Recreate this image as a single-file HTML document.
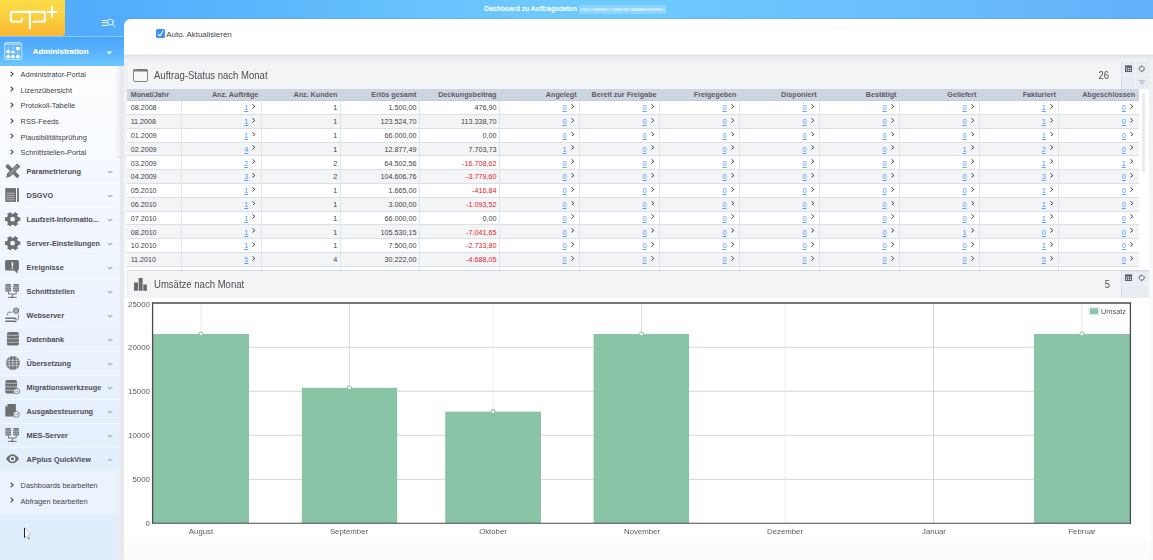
<!DOCTYPE html>
<html lang="de">
<head>
<meta charset="utf-8">
<title>Dashboard zu Auftragsdaten</title>
<style>
*{box-sizing:border-box;margin:0;padding:0}
html,body{width:1153px;height:560px;overflow:hidden}
body{font-family:"Liberation Sans",sans-serif;font-size:7.2px;color:#433c49;background:linear-gradient(180deg,#eff0f3 0,#f0f1f4 90px,#f8f9fa 290px,#f9fbfb 560px);position:relative}
.abs{position:absolute}
#hdr{left:0;top:0;width:1153px;height:36px;background:linear-gradient(90deg,#50a9fb 0%,#55aefc 12%,#6ecafd 47%,#6ecafd 55%,#67b9fc 88%,#62b1fb 100%)}
#hdrtitle{left:484.3px;top:3.8px;font-size:6.8px;font-weight:bold;color:#fff;white-space:nowrap;line-height:9px}
#blur{left:579px;top:5px;width:87px;height:8.8px;background:rgba(255,255,255,.2);filter:blur(.5px)}
#logo{left:0;top:0;width:65.2px;height:36.4px;background:linear-gradient(180deg,#fcdc48 0%,#fbd03f 45%,#fbb733 100%);border-bottom-right-radius:3.5px}
#side{left:0;top:66px;width:120px;height:494px;background:linear-gradient(180deg,#fdfeff 0,#f7fafe 93px,#ebf3fd 405px,#ebf3fd 448px,#e0edfc 449px,#e0edfc 100%)}
#sideedge{left:114px;top:66px;width:6px;height:494px;background:linear-gradient(90deg,rgba(236,239,244,0),rgba(234,237,242,.9))}
#strip{left:120px;top:36px;width:4px;height:524px;background:#e7e9ed}
#admin{left:0;top:36px;width:124px;height:30.3px;background:linear-gradient(180deg,#4ba5fb 0%,#58b1fc 45%,#6cc6fc 100%);border-top:.8px solid #83cbfd}
#admintx{left:32.8px;top:46.9px;font-size:7.9px;font-weight:bold;color:#fff;line-height:10px;white-space:nowrap;text-shadow:0 0 .6px rgba(255,255,255,.5)}
.sub{position:absolute;left:20.6px;font-size:7.4px;color:#473f4e;line-height:10px;white-space:nowrap}
.chev{position:absolute;left:9.6px;width:4px;height:6px}
.mi{position:absolute;left:0;width:120px;height:24px;border-top:.8px solid rgba(255,255,255,.45)}
.mi .t{position:absolute;left:26.6px;top:7px;font-size:7.35px;font-weight:bold;color:#4f4a57;line-height:10px;white-space:nowrap}
.mi .ar{position:absolute;left:107.4px;top:10.6px;width:6px;height:3px}
.mi svg{position:absolute;left:0;top:-.8px}
#panel{left:124px;top:18.8px;width:1029px;height:35.7px;background:#fff;border-top-left-radius:6.5px}
#panelsh{left:124px;top:54.5px;width:1029px;height:5px;background:linear-gradient(180deg,#e2e4e7,#eef0f3)}
#cb{left:155.6px;top:29.2px;width:9px;height:9.2px;background:#3d8ffc;border-radius:1.6px}
#cbtx{left:166.3px;top:30.1px;font-size:7.9px;line-height:10px;color:#473d49;white-space:nowrap}
.ph{position:absolute;left:127px;width:1021.8px;background:#f3f4f6;border-left:.8px solid #eceef1}
.ptitle{position:absolute;left:154px;font-size:10.7px;line-height:12px;color:#4f4c55;white-space:nowrap;transform:scaleX(.893);transform-origin:0 50%}
.pcount{position:absolute;font-size:10.8px;line-height:12px;color:#4f4c55;text-align:right;width:30px;transform:scaleX(.87);transform-origin:100% 50%}
.tools{position:absolute;left:1121px;width:27.8px;background:#e9ecf2;border-left:1.2px solid #d7dde8;border-top:.8px solid #e1e5ec}
.tb{position:absolute;background:#e9ecf1}
#tbl{left:127.25px;top:89.4px;width:1011.5px;height:180.8px;overflow:hidden;background:#fff}
.hr{position:absolute;left:0;top:0;width:1011.5px;height:11.3px;background:#cdd5e0;border-bottom:.8px solid #c3ccd9}
.hc{position:absolute;top:.9px;font-size:7.2px;font-weight:bold;color:#605c67;line-height:9px;white-space:nowrap}
.r{position:absolute;left:0;width:1011.5px;height:13.8px;border-bottom:.9px solid #dce1e9}
.r.e{background:#f3f4f6}
.c{position:absolute;top:2.1px;font-size:7.2px;line-height:9px;color:#433c49;white-space:nowrap}
.c.neg{color:#e8202a}
.lk{position:absolute;top:2.1px;font-size:7.2px;line-height:9px;color:#4a95fb;text-decoration:underline;text-decoration-thickness:.75px;text-underline-offset:.9px;text-decoration-color:rgba(61,143,252,.85);white-space:nowrap}
.gt{position:absolute;top:2.7px;width:3.6px;height:4.8px}
.vl{position:absolute;top:11.8px;width:.9px;height:170px;background:#e0e4eb}
#sb{left:1138.75px;top:89.4px;width:10px;height:180.8px;background:#fff}
#sbth{left:1142px;top:93px;width:2.8px;height:79px;background:#e9ebef;border-radius:1.4px}
#chartbg{left:124px;top:297.8px;width:1025.5px;height:239.5px;background:#fff}
#below{left:124px;top:535.5px;width:1025.5px;height:25px;background:linear-gradient(180deg,#fff 0,#fafdfc 5px,#f9fcfb 100%)}
.yl{will-change:transform;position:absolute;font-size:7.9px;line-height:9px;color:#5c5c5c;text-align:right;width:30px;left:119.6px}
.xl{will-change:transform;position:absolute;font-size:7.8px;line-height:9px;color:#5c5c5c;text-align:center;width:60px;top:527.4px}
</style>
</head>
<body>

<div id="hdr" class="abs"></div>
<div id="hdrtitle" class="abs">Dashboard zu Auftragsdaten</div>
<div id="blur" class="abs"></div><div class="abs" style="left:580px;top:7.8px;width:85px;height:3.4px;filter:blur(.7px);background:linear-gradient(90deg,rgba(255,255,255,.25) 0,rgba(255,255,255,.4) 6%,rgba(255,255,255,.2) 14%,rgba(255,255,255,.45) 18%,rgba(255,255,255,.45) 30%,rgba(255,255,255,.15) 36%,rgba(255,255,255,.35) 40%,rgba(255,255,255,.5) 47%,rgba(255,255,255,.25) 51%,rgba(255,255,255,.55) 54%,rgba(255,255,255,.25) 58%,rgba(255,255,255,.5) 62%,rgba(255,255,255,.55) 72%,rgba(255,255,255,.4) 78%,rgba(255,255,255,.5) 92%,rgba(255,255,255,.25) 100%)"></div>
<div id="logo" class="abs"><svg width="66" height="37" viewBox="0 0 66 37" fill="none" stroke="#fff" stroke-width="2.1" stroke-linecap="round" stroke-linejoin="round"><path d="M21.9 18.6V19.6Q21.9 21.8 19.7 21.8H13.1Q10.9 21.8 10.9 19.6V14.1Q10.9 11.9 13.1 11.9H42.7Q44.9 11.9 44.9 14.1V19.6Q44.9 21.8 42.7 21.8H33.6"/><path d="M29.9 12V28.2"/><path d="M47.6 12H56.6M52 7V16.8"/></svg></div>
<svg class="abs" style="left:100px;top:17px" width="18" height="12" viewBox="100 17 18 12" fill="none" stroke="rgba(255,255,255,.95)" stroke-width=".95" stroke-linecap="round"><path d="M102.2 20.5H106.7M102.2 22.6H106.5M102.2 25.4H107.8"/><circle cx="110.4" cy="22.1" r="2.9"/><path d="M112.5 24.3L114.8 26.6"/></svg>
<div id="side" class="abs"></div>
<div id="sideedge" class="abs"></div>
<div id="strip" class="abs"></div>
<div id="admin" class="abs"></div>
<svg class="abs" style="left:3px;top:40px" width="21" height="22" viewBox="3 40 21 22">
<rect x="4.6" y="42.5" width="17.2" height="17.1" rx="1.6" fill="rgba(255,255,255,.08)" stroke="rgba(255,255,255,.75)" stroke-width=".8"/>
<path d="M5 42.9H21.4V44.6H5Z" fill="rgba(255,255,255,.3)"/><path d="M4.8 44.7H21.6" stroke="rgba(255,255,255,.55)" stroke-width=".6"/>
<path d="M8.3 46.3V58.4M12.9 46.3V58.4M17.8 46.3V58.4" stroke="rgba(255,255,255,.65)" stroke-width=".7"/>
<rect x="6.2" y="50.2" width="3.8" height="2.5" rx=".5" fill="#fff"/>
<rect x="11.1" y="51.3" width="3.8" height="1.7" rx=".4" fill="#fff"/>
<rect x="15.9" y="46.9" width="4.1" height="2.9" rx=".6" fill="#fff"/>
<ellipse cx="8.1" cy="56.6" rx="2" ry="1.7" fill="#fff"/><ellipse cx="12.9" cy="56.6" rx="2" ry="1.7" fill="#fff"/><ellipse cx="17.9" cy="56.6" rx="2" ry="1.7" fill="#fff"/>
</svg>
<div id="admintx" class="abs">Administration</div>
<svg class="abs" style="left:106px;top:50.6px" width="7" height="4" viewBox="0 0 7 4"><path d="M.3 .3H6.5L3.4 3.7Z" fill="rgba(255,255,255,.72)"/></svg>
<svg class="chev" style="top:70.7px" viewBox="0 0 4 6" fill="none" stroke="#524e58" stroke-width="1.05" stroke-linecap="round" stroke-linejoin="round"><path d="M.9 1L3.1 3L.9 5"/></svg>
<div class="sub" style="top:70px">Administrator-Portal</div>
<svg class="chev" style="top:86.3px" viewBox="0 0 4 6" fill="none" stroke="#524e58" stroke-width="1.05" stroke-linecap="round" stroke-linejoin="round"><path d="M.9 1L3.1 3L.9 5"/></svg>
<div class="sub" style="top:85.6px">Lizenzübersicht</div>
<svg class="chev" style="top:101.9px" viewBox="0 0 4 6" fill="none" stroke="#524e58" stroke-width="1.05" stroke-linecap="round" stroke-linejoin="round"><path d="M.9 1L3.1 3L.9 5"/></svg>
<div class="sub" style="top:101.2px">Protokoll-Tabelle</div>
<svg class="chev" style="top:117.5px" viewBox="0 0 4 6" fill="none" stroke="#524e58" stroke-width="1.05" stroke-linecap="round" stroke-linejoin="round"><path d="M.9 1L3.1 3L.9 5"/></svg>
<div class="sub" style="top:116.8px">RSS-Feeds</div>
<svg class="chev" style="top:133.2px" viewBox="0 0 4 6" fill="none" stroke="#524e58" stroke-width="1.05" stroke-linecap="round" stroke-linejoin="round"><path d="M.9 1L3.1 3L.9 5"/></svg>
<div class="sub" style="top:132.5px">Plausibilitätsprüfung</div>
<svg class="chev" style="top:148.7px" viewBox="0 0 4 6" fill="none" stroke="#524e58" stroke-width="1.05" stroke-linecap="round" stroke-linejoin="round"><path d="M.9 1L3.1 3L.9 5"/></svg>
<div class="sub" style="top:148px">Schnittstellen-Portal</div>
<svg class="chev" style="top:481.7px" viewBox="0 0 4 6" fill="none" stroke="#524e58" stroke-width="1.05" stroke-linecap="round" stroke-linejoin="round"><path d="M.9 1L3.1 3L.9 5"/></svg>
<div class="sub" style="top:481px">Dashboards bearbeiten</div>
<svg class="chev" style="top:497.3px" viewBox="0 0 4 6" fill="none" stroke="#524e58" stroke-width="1.05" stroke-linecap="round" stroke-linejoin="round"><path d="M.9 1L3.1 3L.9 5"/></svg>
<div class="sub" style="top:496.6px">Abfragen bearbeiten</div>
<div class="mi" style="top:159px;background:#f4f8fe"><svg width="24" height="24" viewBox="0 0 24 24"><g transform="rotate(-45 12.6 12.2)"><rect x="10.8" y="3.6" width="3.6" height="16.8" fill="#6d6e71"/></g><g transform="rotate(45 12.6 12.2)"><path d="M10.4 3.4H14.8V17.4L12.6 21.4L10.4 17.4Z" fill="#6d6e71"/><path d="M11.9 4.4V17M13.3 4.4V17" stroke="#dfe6f0" stroke-width=".45"/></g></svg><div class="t">Parametrierung</div><svg class="ar" style="left:107.4px;top:10.6px" viewBox="0 0 6 3"><path d="M.2 .1H5.8L3 2.9Z" fill="#b6bfcc"/></svg></div>
<div class="mi" style="top:183px;background:#f3f7fe"><svg width="24" height="24" viewBox="0 0 24 24"><rect x="5.3" y="5.1" width="10.7" height="13.8" fill="#6d6e71"/><path d="M6.6 10.2H14.8M6.6 12.4H14.8M6.6 14.6H14.8M6.6 16.8H14.8" stroke="#c9ccd2" stroke-width=".8"/><rect x="17.1" y="5.1" width="1.8" height="13.8" fill="#6d6e71"/></svg><div class="t">DSGVO</div><svg class="ar" style="left:107.4px;top:10.6px" viewBox="0 0 6 3"><path d="M.2 .1H5.8L3 2.9Z" fill="#b6bfcc"/></svg></div>
<div class="mi" style="top:207px;background:#f1f6fe"><svg width="24" height="24" viewBox="0 0 24 24"><path d="M17.85 10.7 L19.75 10.87 L19.75 13.53 L17.85 13.7 L16.63 15.64 L17.43 17.23 L14.92 18.57 L13.82 17.13 L11.38 17.13 L10.28 18.57 L7.77 17.23 L8.57 15.64 L7.35 13.7 L5.45 13.53 L5.45 10.87 L7.35 10.7 L8.57 8.76 L7.77 7.17 L10.28 5.83 L11.38 7.27 L13.82 7.27 L14.92 5.83 L17.43 7.17 L16.63 8.76Z" fill="#6d6e71" stroke="#6d6e71" stroke-width="1.1" stroke-linejoin="round"/><circle cx="12.6" cy="12.2" r="2.35" fill="#f2f6fc"/></svg><div class="t">Laufzeit-Informatio...</div><svg class="ar" style="left:107.4px;top:10.6px" viewBox="0 0 6 3"><path d="M.2 .1H5.8L3 2.9Z" fill="#b6bfcc"/></svg></div>
<div class="mi" style="top:231px;background:#f0f6fe"><svg width="24" height="24" viewBox="0 0 24 24"><path d="M17.85 10.7 L19.75 10.87 L19.75 13.53 L17.85 13.7 L16.63 15.64 L17.43 17.23 L14.92 18.57 L13.82 17.13 L11.38 17.13 L10.28 18.57 L7.77 17.23 L8.57 15.64 L7.35 13.7 L5.45 13.53 L5.45 10.87 L7.35 10.7 L8.57 8.76 L7.77 7.17 L10.28 5.83 L11.38 7.27 L13.82 7.27 L14.92 5.83 L17.43 7.17 L16.63 8.76Z" fill="#6d6e71" stroke="#6d6e71" stroke-width="1.1" stroke-linejoin="round"/><circle cx="12.6" cy="12.2" r="2.35" fill="#f2f6fc"/></svg><div class="t">Server-Einstellungen</div><svg class="ar" style="left:107.4px;top:10.6px" viewBox="0 0 6 3"><path d="M.2 .1H5.8L3 2.9Z" fill="#b6bfcc"/></svg></div>
<div class="mi" style="top:255px;background:#eef5fd"><svg width="24" height="24" viewBox="0 0 24 24"><path d="M6.6 5.1H17.4Q18.9 5.1 18.9 6.6V14Q18.9 15.4 17.6 15.4L17.7 18.6L14.2 15.4H6.6Q5.1 15.4 5.1 13.9V6.6Q5.1 5.1 6.6 5.1Z" fill="#6d6e71"/><path d="M12.4 7.2V11.6" stroke="#fff" stroke-width="1.5"/><rect x="11.65" y="12.6" width="1.5" height="1.4" fill="#fff"/></svg><div class="t">Ereignisse</div><svg class="ar" style="left:107.4px;top:10.6px" viewBox="0 0 6 3"><path d="M.2 .1H5.8L3 2.9Z" fill="#b6bfcc"/></svg></div>
<div class="mi" style="top:279px;background:#edf4fd"><svg width="24" height="24" viewBox="0 0 24 24"><rect x="5.3" y="5.1" width="5.8" height="7.5" rx="1" ry="0.8" fill="#6d6e71"/><path d="M5.3 6.5Q8.2 7.6 11.1 6.5" fill="none" stroke="#dde1e8" stroke-width=".65"/><path d="M5.3 8.45Q8.2 9.55 11.1 8.45" fill="none" stroke="#dde1e8" stroke-width=".65"/><path d="M5.3 10.4Q8.2 11.5 11.1 10.4" fill="none" stroke="#dde1e8" stroke-width=".65"/><rect x="13.2" y="5.1" width="5.8" height="7.5" rx="1" ry="0.8" fill="#6d6e71"/><path d="M13.2 6.5Q16.1 7.6 19 6.5" fill="none" stroke="#dde1e8" stroke-width=".65"/><path d="M13.2 8.45Q16.1 9.55 19 8.45" fill="none" stroke="#dde1e8" stroke-width=".65"/><path d="M13.2 10.4Q16.1 11.5 19 10.4" fill="none" stroke="#dde1e8" stroke-width=".65"/><path d="M8.5 12.7 V15 H16.2 V12.7 M12.35 15 V18.2 M8.1 18.4 H16.7" fill="none" stroke="#6d6e71" stroke-width=".95"/><path d="M10.9 18.5 L12.35 16.6 L13.8 18.5 Z" fill="#6d6e71"/></svg><div class="t">Schnittstellen</div><svg class="ar" style="left:107.4px;top:10.6px" viewBox="0 0 6 3"><path d="M.2 .1H5.8L3 2.9Z" fill="#b6bfcc"/></svg></div>
<div class="mi" style="top:303px;background:#ecf4fd"><svg width="24" height="24" viewBox="0 0 24 24"><g transform="translate(0 .8)"><circle cx="16.1" cy="6.9" r="2.7" fill="none" stroke="#6d6e71" stroke-width="1"/><path d="M13.4 6.9H18.8M16.1 4.2V9.6M14.9 4.5Q14 6.9 14.9 9.3M17.3 4.5Q18.2 6.9 17.3 9.3" fill="none" stroke="#6d6e71" stroke-width=".55"/><path d="M7.7 12V9.5Q7.7 8.4 8.8 8.4H12.2M18.4 10.6V14.8Q18.4 16 17.2 16H15.6" fill="none" stroke="#6d6e71" stroke-width=".8"/><path d="M5.3 14.4H14.6Q15.9 14.4 15.9 15.6" fill="none" stroke="#6d6e71" stroke-width="1.5"/><path d="M5.3 17.4H14.6Q15.9 17.4 15.9 18.4" fill="none" stroke="#6d6e71" stroke-width="1.5"/></g></svg><div class="t">Webserver</div><svg class="ar" style="left:107.4px;top:10.6px" viewBox="0 0 6 3"><path d="M.2 .1H5.8L3 2.9Z" fill="#b6bfcc"/></svg></div>
<div class="mi" style="top:327px;background:#eaf3fd"><svg width="24" height="24" viewBox="0 0 24 24"><rect x="6.9" y="5.1" width="12" height="13.5" rx="2.2" ry="1.6" fill="#6d6e71"/><path d="M6.9 8Q12.9 9.1 18.9 8" fill="none" stroke="#dde1e8" stroke-width=".65"/><path d="M6.9 11.45Q12.9 12.55 18.9 11.45" fill="none" stroke="#dde1e8" stroke-width=".65"/><path d="M6.9 14.9Q12.9 16 18.9 14.9" fill="none" stroke="#dde1e8" stroke-width=".65"/></svg><div class="t">Datenbank</div><svg class="ar" style="left:107.4px;top:10.6px" viewBox="0 0 6 3"><path d="M.2 .1H5.8L3 2.9Z" fill="#b6bfcc"/></svg></div>
<div class="mi" style="top:351px;background:#e9f2fd"><svg width="24" height="24" viewBox="0 0 24 24"><circle cx="12.9" cy="12" r="7" fill="#6d6e71"/><path d="M6.5 9.3H19.3M6 12H19.8M6.5 14.7H19.3M12.9 5V19M9.8 5.6Q8.2 12 9.8 18.4M16 5.6Q17.6 12 16 18.4" fill="none" stroke="#e9eff8" stroke-width=".6"/></svg><div class="t">Übersetzung</div><svg class="ar" style="left:107.4px;top:10.6px" viewBox="0 0 6 3"><path d="M.2 .1H5.8L3 2.9Z" fill="#b6bfcc"/></svg></div>
<div class="mi" style="top:375px;background:#e7f1fc"><svg width="24" height="24" viewBox="0 0 24 24"><rect x="5.3" y="5.1" width="11.8" height="13.5" rx="2.2" ry="1.6" fill="#6d6e71"/><path d="M5.3 8Q11.2 9.1 17.1 8" fill="none" stroke="#dde1e8" stroke-width=".65"/><path d="M5.3 11.45Q11.2 12.55 17.1 11.45" fill="none" stroke="#dde1e8" stroke-width=".65"/><path d="M5.3 14.9Q11.2 16 17.1 14.9" fill="none" stroke="#dde1e8" stroke-width=".65"/><ellipse cx="16.6" cy="16.1" rx="3.2" ry="2.6" fill="#eaf1fb" stroke="#6d6e71" stroke-width=".8"/><path d="M14.8 16.1H18.3" stroke="#6d6e71" stroke-width=".7"/></svg><div class="t">Migrationswerkzeuge</div><svg class="ar" style="left:107.4px;top:10.6px" viewBox="0 0 6 3"><path d="M.2 .1H5.8L3 2.9Z" fill="#b6bfcc"/></svg></div>
<div class="mi" style="top:399px;background:#e6f0fc"><svg width="24" height="24" viewBox="0 0 24 24"><path d="M7.8 5.1H15.9V17.6H5.3V7.6Z" fill="#6d6e71"/><path d="M5.6 7.4L7.6 5.4V7.4Z" fill="#dfe6f0"/><circle cx="16.3" cy="15.4" r="3" fill="#eaf1fb" stroke="#6d6e71" stroke-width=".8"/><path d="M14.6 15.4H17M17 15.4L18 14.2M17 15.4L18 16.6" stroke="#6d6e71" stroke-width=".6" fill="none"/></svg><div class="t">Ausgabesteuerung</div><svg class="ar" style="left:107.4px;top:10.6px" viewBox="0 0 6 3"><path d="M.2 .1H5.8L3 2.9Z" fill="#b6bfcc"/></svg></div>
<div class="mi" style="top:423px;background:#e4f0fc"><svg width="24" height="24" viewBox="0 0 24 24"><rect x="5.3" y="5.1" width="5.8" height="7.5" rx="1" ry="0.8" fill="#6d6e71"/><path d="M5.3 6.5Q8.2 7.6 11.1 6.5" fill="none" stroke="#dde1e8" stroke-width=".65"/><path d="M5.3 8.45Q8.2 9.55 11.1 8.45" fill="none" stroke="#dde1e8" stroke-width=".65"/><path d="M5.3 10.4Q8.2 11.5 11.1 10.4" fill="none" stroke="#dde1e8" stroke-width=".65"/><rect x="13.2" y="5.1" width="5.8" height="7.5" rx="1" ry="0.8" fill="#6d6e71"/><path d="M13.2 6.5Q16.1 7.6 19 6.5" fill="none" stroke="#dde1e8" stroke-width=".65"/><path d="M13.2 8.45Q16.1 9.55 19 8.45" fill="none" stroke="#dde1e8" stroke-width=".65"/><path d="M13.2 10.4Q16.1 11.5 19 10.4" fill="none" stroke="#dde1e8" stroke-width=".65"/><path d="M8.5 12.7 V15 H16.2 V12.7 M12.35 15 V18.2 M8.1 18.4 H16.7" fill="none" stroke="#6d6e71" stroke-width=".95"/><path d="M10.9 18.5 L12.35 16.6 L13.8 18.5 Z" fill="#6d6e71"/></svg><div class="t">MES-Server</div><svg class="ar" style="left:107.4px;top:10.6px" viewBox="0 0 6 3"><path d="M.2 .1H5.8L3 2.9Z" fill="#b6bfcc"/></svg></div>
<div class="mi" style="top:447px;background:#e3effc"><svg width="24" height="24" viewBox="0 0 24 24"><path d="M6 11.8Q9 7.3 12.5 7.3T19 11.8Q16 16.3 12.5 16.3T6 11.8Z" fill="#6d6e71"/><circle cx="12.5" cy="11.8" r="2.9" fill="#eef3fb"/><circle cx="12.5" cy="11.8" r="1.55" fill="#6d6e71"/></svg><div class="t">APplus QuickView</div><svg class="ar" style="left:107.4px;top:9.8px" viewBox="0 0 6 3"><path d="M.2 2.9H5.8L3 .1Z" fill="#b6bfcc"/></svg></div>
<svg class="abs" style="left:23px;top:527px" width="10" height="13" viewBox="0 0 10 13"><path d="M1.5 .9V10.7L3.9 8.7L5.2 11.7L6.6 11.1L5.3 8.1L7.9 7.3Z" fill="#fff" stroke="#9a9ea6" stroke-width=".6" stroke-linejoin="round"/><path d="M1.5 .9V10.7" stroke="#1e2026" stroke-width="1"/><path d="M5.2 11.7L6.6 11.1" stroke="#44474d" stroke-width=".8"/></svg>
<div class="abs" style="left:130px;top:16.6px;width:1023px;height:2.2px;background:linear-gradient(180deg,rgba(40,110,210,0),rgba(40,110,210,.16))"></div>
<div id="panel" class="abs"></div><div id="panelsh" class="abs"></div>
<div id="cb" class="abs"><svg width="9" height="9.2" viewBox="0 0 9 9.2" style="display:block"><path d="M2.3 5.2L3.9 6.9L7 2" fill="none" stroke="#fff" stroke-width="1.05" stroke-linecap="round" stroke-linejoin="round"/></svg></div>
<div id="cbtx" class="abs">Auto. Aktualisieren</div>
<div class="ph" style="top:61.9px;height:27.5px"></div>
<svg class="abs" style="left:132px;top:68px" width="17" height="15" viewBox="132 68 17 15"><rect x="133.5" y="69.5" width="14" height="12" rx="1.5" fill="#f6f7f9" stroke="#85868a" stroke-width="1"/><path d="M133 71.6V71Q133 69 135 69H146Q148 69 148 71V71.6Z" fill="#77787c"/><path d="M134.4 70.2H136.6" stroke="#c4c5c8" stroke-width=".7"/></svg>
<div class="ptitle" style="top:68.9px">Auftrag-Status nach Monat</div>
<div class="pcount" style="left:1079.4px;top:69.3px">26</div>
<div class="tools" style="top:61.9px;height:27.5px"></div>
<div class="abs" style="left:1135px;top:61.9px;width:.8px;height:27.5px;background:#f1f3f6"></div>
<div class="abs" style="left:1121.3px;top:74.8px;width:27.5px;height:.8px;background:#f1f3f6"></div>
<svg class="abs" style="left:1124px;top:65px" width="8" height="8" viewBox="0 0 8 8" fill="none" stroke="#606065"><rect x="1.5" y=".9" width="6" height="5.6" stroke-width="1"/><path d="M1.5 1.9H7.5" stroke-width="1.9"/><path d="M3.5 2.5V6.5M5.5 2.5V6.5" stroke-width=".85"/><path d="M1.5 4.5H7.5" stroke-width=".8"/></svg>
<svg class="abs" style="left:1138px;top:65px" width="8" height="8" viewBox="0 0 8 8"><path d="M2.55 5.95A2.45 2.45 0 0 1 3.8 1.3M5.05 1.65A2.45 2.45 0 0 1 3.8 6.2" fill="none" stroke="#5a5a5f" stroke-width=".95"/><path d="M3.6 .3L4.8 1.3L3.6 2.3ZM4 7.2L2.8 6.2L4 5.2Z" fill="#55555a"/></svg>
<svg class="abs" style="left:1138px;top:79px" width="7.4" height="6.4" viewBox="-.55 -.85 7.4 6.4"><path d="M.1 .5H6.9V1.4H.1Z" fill="#a9adb4"/><path d="M1.3 2.3H5.7L3.5 5.3Z" fill="#bcc0c7"/></svg>
<div id="tbl" class="abs">
<div class="hr"></div>
<div class="hc" style="left:3.4px">Monat/Jahr</div>
<div class="hc" style="right:880.4px">Anz. Aufträge</div>
<div class="hc" style="right:801.4px">Anz. Kunden</div>
<div class="hc" style="right:722.25px">Erlös gesamt</div>
<div class="hc" style="right:642.25px">Deckungsbeitrag</div>
<div class="hc" style="right:562.15px">Angelegt</div>
<div class="hc" style="right:482.15px">Bereit zur Freigabe</div>
<div class="hc" style="right:402.25px">Freigegeben</div>
<div class="hc" style="right:322.15px">Disponiert</div>
<div class="hc" style="right:242.25px">Bestätigt</div>
<div class="hc" style="right:162.25px">Geliefert</div>
<div class="hc" style="right:82.9px">Fakturiert</div>
<div class="hc" style="right:3.5px">Abgeschlossen</div>
<div class="r" style="top:11.85px">
<div class="c" style="left:3.4px">08.2008</div>
<div class="lk" style="right:890.5px">1</div>
<svg class="gt" style="right:882.8px" viewBox="0 0 3.6 4.8" fill="none" stroke="#403e45" stroke-width=".95" stroke-linecap="round" stroke-linejoin="round"><path d="M.7 .6L2.9 2.4L.7 4.2"/></svg>
<div class="c" style="right:801.5px">1</div>
<div class="c" style="right:722.35px">1.500,00</div>
<div class="c" style="right:642.35px">476,90</div>
<div class="lk" style="right:572.25px">0</div>
<svg class="gt" style="right:564.55px" viewBox="0 0 3.6 4.8" fill="none" stroke="#403e45" stroke-width=".95" stroke-linecap="round" stroke-linejoin="round"><path d="M.7 .6L2.9 2.4L.7 4.2"/></svg>
<div class="lk" style="right:492.25px">0</div>
<svg class="gt" style="right:484.55px" viewBox="0 0 3.6 4.8" fill="none" stroke="#403e45" stroke-width=".95" stroke-linecap="round" stroke-linejoin="round"><path d="M.7 .6L2.9 2.4L.7 4.2"/></svg>
<div class="lk" style="right:412.35px">0</div>
<svg class="gt" style="right:404.65px" viewBox="0 0 3.6 4.8" fill="none" stroke="#403e45" stroke-width=".95" stroke-linecap="round" stroke-linejoin="round"><path d="M.7 .6L2.9 2.4L.7 4.2"/></svg>
<div class="lk" style="right:332.25px">0</div>
<svg class="gt" style="right:324.55px" viewBox="0 0 3.6 4.8" fill="none" stroke="#403e45" stroke-width=".95" stroke-linecap="round" stroke-linejoin="round"><path d="M.7 .6L2.9 2.4L.7 4.2"/></svg>
<div class="lk" style="right:252.35px">0</div>
<svg class="gt" style="right:244.65px" viewBox="0 0 3.6 4.8" fill="none" stroke="#403e45" stroke-width=".95" stroke-linecap="round" stroke-linejoin="round"><path d="M.7 .6L2.9 2.4L.7 4.2"/></svg>
<div class="lk" style="right:172.35px">0</div>
<svg class="gt" style="right:164.65px" viewBox="0 0 3.6 4.8" fill="none" stroke="#403e45" stroke-width=".95" stroke-linecap="round" stroke-linejoin="round"><path d="M.7 .6L2.9 2.4L.7 4.2"/></svg>
<div class="lk" style="right:93px">1</div>
<svg class="gt" style="right:85.3px" viewBox="0 0 3.6 4.8" fill="none" stroke="#403e45" stroke-width=".95" stroke-linecap="round" stroke-linejoin="round"><path d="M.7 .6L2.9 2.4L.7 4.2"/></svg>
<div class="lk" style="right:13px">0</div>
<svg class="gt" style="right:5.3px" viewBox="0 0 3.6 4.8" fill="none" stroke="#403e45" stroke-width=".95" stroke-linecap="round" stroke-linejoin="round"><path d="M.7 .6L2.9 2.4L.7 4.2"/></svg>
</div>
<div class="r e" style="top:25.65px">
<div class="c" style="left:3.4px">11.2008</div>
<div class="lk" style="right:890.5px">1</div>
<svg class="gt" style="right:882.8px" viewBox="0 0 3.6 4.8" fill="none" stroke="#403e45" stroke-width=".95" stroke-linecap="round" stroke-linejoin="round"><path d="M.7 .6L2.9 2.4L.7 4.2"/></svg>
<div class="c" style="right:801.5px">1</div>
<div class="c" style="right:722.35px">123.524,70</div>
<div class="c" style="right:642.35px">113.338,70</div>
<div class="lk" style="right:572.25px">0</div>
<svg class="gt" style="right:564.55px" viewBox="0 0 3.6 4.8" fill="none" stroke="#403e45" stroke-width=".95" stroke-linecap="round" stroke-linejoin="round"><path d="M.7 .6L2.9 2.4L.7 4.2"/></svg>
<div class="lk" style="right:492.25px">0</div>
<svg class="gt" style="right:484.55px" viewBox="0 0 3.6 4.8" fill="none" stroke="#403e45" stroke-width=".95" stroke-linecap="round" stroke-linejoin="round"><path d="M.7 .6L2.9 2.4L.7 4.2"/></svg>
<div class="lk" style="right:412.35px">0</div>
<svg class="gt" style="right:404.65px" viewBox="0 0 3.6 4.8" fill="none" stroke="#403e45" stroke-width=".95" stroke-linecap="round" stroke-linejoin="round"><path d="M.7 .6L2.9 2.4L.7 4.2"/></svg>
<div class="lk" style="right:332.25px">0</div>
<svg class="gt" style="right:324.55px" viewBox="0 0 3.6 4.8" fill="none" stroke="#403e45" stroke-width=".95" stroke-linecap="round" stroke-linejoin="round"><path d="M.7 .6L2.9 2.4L.7 4.2"/></svg>
<div class="lk" style="right:252.35px">0</div>
<svg class="gt" style="right:244.65px" viewBox="0 0 3.6 4.8" fill="none" stroke="#403e45" stroke-width=".95" stroke-linecap="round" stroke-linejoin="round"><path d="M.7 .6L2.9 2.4L.7 4.2"/></svg>
<div class="lk" style="right:172.35px">0</div>
<svg class="gt" style="right:164.65px" viewBox="0 0 3.6 4.8" fill="none" stroke="#403e45" stroke-width=".95" stroke-linecap="round" stroke-linejoin="round"><path d="M.7 .6L2.9 2.4L.7 4.2"/></svg>
<div class="lk" style="right:93px">1</div>
<svg class="gt" style="right:85.3px" viewBox="0 0 3.6 4.8" fill="none" stroke="#403e45" stroke-width=".95" stroke-linecap="round" stroke-linejoin="round"><path d="M.7 .6L2.9 2.4L.7 4.2"/></svg>
<div class="lk" style="right:13px">0</div>
<svg class="gt" style="right:5.3px" viewBox="0 0 3.6 4.8" fill="none" stroke="#403e45" stroke-width=".95" stroke-linecap="round" stroke-linejoin="round"><path d="M.7 .6L2.9 2.4L.7 4.2"/></svg>
</div>
<div class="r" style="top:39.45px">
<div class="c" style="left:3.4px">01.2009</div>
<div class="lk" style="right:890.5px">1</div>
<svg class="gt" style="right:882.8px" viewBox="0 0 3.6 4.8" fill="none" stroke="#403e45" stroke-width=".95" stroke-linecap="round" stroke-linejoin="round"><path d="M.7 .6L2.9 2.4L.7 4.2"/></svg>
<div class="c" style="right:801.5px">1</div>
<div class="c" style="right:722.35px">66.000,00</div>
<div class="c" style="right:642.35px">0,00</div>
<div class="lk" style="right:572.25px">0</div>
<svg class="gt" style="right:564.55px" viewBox="0 0 3.6 4.8" fill="none" stroke="#403e45" stroke-width=".95" stroke-linecap="round" stroke-linejoin="round"><path d="M.7 .6L2.9 2.4L.7 4.2"/></svg>
<div class="lk" style="right:492.25px">0</div>
<svg class="gt" style="right:484.55px" viewBox="0 0 3.6 4.8" fill="none" stroke="#403e45" stroke-width=".95" stroke-linecap="round" stroke-linejoin="round"><path d="M.7 .6L2.9 2.4L.7 4.2"/></svg>
<div class="lk" style="right:412.35px">0</div>
<svg class="gt" style="right:404.65px" viewBox="0 0 3.6 4.8" fill="none" stroke="#403e45" stroke-width=".95" stroke-linecap="round" stroke-linejoin="round"><path d="M.7 .6L2.9 2.4L.7 4.2"/></svg>
<div class="lk" style="right:332.25px">0</div>
<svg class="gt" style="right:324.55px" viewBox="0 0 3.6 4.8" fill="none" stroke="#403e45" stroke-width=".95" stroke-linecap="round" stroke-linejoin="round"><path d="M.7 .6L2.9 2.4L.7 4.2"/></svg>
<div class="lk" style="right:252.35px">0</div>
<svg class="gt" style="right:244.65px" viewBox="0 0 3.6 4.8" fill="none" stroke="#403e45" stroke-width=".95" stroke-linecap="round" stroke-linejoin="round"><path d="M.7 .6L2.9 2.4L.7 4.2"/></svg>
<div class="lk" style="right:172.35px">0</div>
<svg class="gt" style="right:164.65px" viewBox="0 0 3.6 4.8" fill="none" stroke="#403e45" stroke-width=".95" stroke-linecap="round" stroke-linejoin="round"><path d="M.7 .6L2.9 2.4L.7 4.2"/></svg>
<div class="lk" style="right:93px">1</div>
<svg class="gt" style="right:85.3px" viewBox="0 0 3.6 4.8" fill="none" stroke="#403e45" stroke-width=".95" stroke-linecap="round" stroke-linejoin="round"><path d="M.7 .6L2.9 2.4L.7 4.2"/></svg>
<div class="lk" style="right:13px">0</div>
<svg class="gt" style="right:5.3px" viewBox="0 0 3.6 4.8" fill="none" stroke="#403e45" stroke-width=".95" stroke-linecap="round" stroke-linejoin="round"><path d="M.7 .6L2.9 2.4L.7 4.2"/></svg>
</div>
<div class="r e" style="top:53.25px">
<div class="c" style="left:3.4px">02.2009</div>
<div class="lk" style="right:890.5px">4</div>
<svg class="gt" style="right:882.8px" viewBox="0 0 3.6 4.8" fill="none" stroke="#403e45" stroke-width=".95" stroke-linecap="round" stroke-linejoin="round"><path d="M.7 .6L2.9 2.4L.7 4.2"/></svg>
<div class="c" style="right:801.5px">1</div>
<div class="c" style="right:722.35px">12.877,49</div>
<div class="c" style="right:642.35px">7.703,73</div>
<div class="lk" style="right:572.25px">1</div>
<svg class="gt" style="right:564.55px" viewBox="0 0 3.6 4.8" fill="none" stroke="#403e45" stroke-width=".95" stroke-linecap="round" stroke-linejoin="round"><path d="M.7 .6L2.9 2.4L.7 4.2"/></svg>
<div class="lk" style="right:492.25px">0</div>
<svg class="gt" style="right:484.55px" viewBox="0 0 3.6 4.8" fill="none" stroke="#403e45" stroke-width=".95" stroke-linecap="round" stroke-linejoin="round"><path d="M.7 .6L2.9 2.4L.7 4.2"/></svg>
<div class="lk" style="right:412.35px">0</div>
<svg class="gt" style="right:404.65px" viewBox="0 0 3.6 4.8" fill="none" stroke="#403e45" stroke-width=".95" stroke-linecap="round" stroke-linejoin="round"><path d="M.7 .6L2.9 2.4L.7 4.2"/></svg>
<div class="lk" style="right:332.25px">0</div>
<svg class="gt" style="right:324.55px" viewBox="0 0 3.6 4.8" fill="none" stroke="#403e45" stroke-width=".95" stroke-linecap="round" stroke-linejoin="round"><path d="M.7 .6L2.9 2.4L.7 4.2"/></svg>
<div class="lk" style="right:252.35px">0</div>
<svg class="gt" style="right:244.65px" viewBox="0 0 3.6 4.8" fill="none" stroke="#403e45" stroke-width=".95" stroke-linecap="round" stroke-linejoin="round"><path d="M.7 .6L2.9 2.4L.7 4.2"/></svg>
<div class="lk" style="right:172.35px">1</div>
<svg class="gt" style="right:164.65px" viewBox="0 0 3.6 4.8" fill="none" stroke="#403e45" stroke-width=".95" stroke-linecap="round" stroke-linejoin="round"><path d="M.7 .6L2.9 2.4L.7 4.2"/></svg>
<div class="lk" style="right:93px">2</div>
<svg class="gt" style="right:85.3px" viewBox="0 0 3.6 4.8" fill="none" stroke="#403e45" stroke-width=".95" stroke-linecap="round" stroke-linejoin="round"><path d="M.7 .6L2.9 2.4L.7 4.2"/></svg>
<div class="lk" style="right:13px">0</div>
<svg class="gt" style="right:5.3px" viewBox="0 0 3.6 4.8" fill="none" stroke="#403e45" stroke-width=".95" stroke-linecap="round" stroke-linejoin="round"><path d="M.7 .6L2.9 2.4L.7 4.2"/></svg>
</div>
<div class="r" style="top:67.05px">
<div class="c" style="left:3.4px">03.2009</div>
<div class="lk" style="right:890.5px">2</div>
<svg class="gt" style="right:882.8px" viewBox="0 0 3.6 4.8" fill="none" stroke="#403e45" stroke-width=".95" stroke-linecap="round" stroke-linejoin="round"><path d="M.7 .6L2.9 2.4L.7 4.2"/></svg>
<div class="c" style="right:801.5px">2</div>
<div class="c" style="right:722.35px">64.502,56</div>
<div class="c neg" style="right:642.35px">-16.708,62</div>
<div class="lk" style="right:572.25px">0</div>
<svg class="gt" style="right:564.55px" viewBox="0 0 3.6 4.8" fill="none" stroke="#403e45" stroke-width=".95" stroke-linecap="round" stroke-linejoin="round"><path d="M.7 .6L2.9 2.4L.7 4.2"/></svg>
<div class="lk" style="right:492.25px">0</div>
<svg class="gt" style="right:484.55px" viewBox="0 0 3.6 4.8" fill="none" stroke="#403e45" stroke-width=".95" stroke-linecap="round" stroke-linejoin="round"><path d="M.7 .6L2.9 2.4L.7 4.2"/></svg>
<div class="lk" style="right:412.35px">0</div>
<svg class="gt" style="right:404.65px" viewBox="0 0 3.6 4.8" fill="none" stroke="#403e45" stroke-width=".95" stroke-linecap="round" stroke-linejoin="round"><path d="M.7 .6L2.9 2.4L.7 4.2"/></svg>
<div class="lk" style="right:332.25px">0</div>
<svg class="gt" style="right:324.55px" viewBox="0 0 3.6 4.8" fill="none" stroke="#403e45" stroke-width=".95" stroke-linecap="round" stroke-linejoin="round"><path d="M.7 .6L2.9 2.4L.7 4.2"/></svg>
<div class="lk" style="right:252.35px">0</div>
<svg class="gt" style="right:244.65px" viewBox="0 0 3.6 4.8" fill="none" stroke="#403e45" stroke-width=".95" stroke-linecap="round" stroke-linejoin="round"><path d="M.7 .6L2.9 2.4L.7 4.2"/></svg>
<div class="lk" style="right:172.35px">0</div>
<svg class="gt" style="right:164.65px" viewBox="0 0 3.6 4.8" fill="none" stroke="#403e45" stroke-width=".95" stroke-linecap="round" stroke-linejoin="round"><path d="M.7 .6L2.9 2.4L.7 4.2"/></svg>
<div class="lk" style="right:93px">1</div>
<svg class="gt" style="right:85.3px" viewBox="0 0 3.6 4.8" fill="none" stroke="#403e45" stroke-width=".95" stroke-linecap="round" stroke-linejoin="round"><path d="M.7 .6L2.9 2.4L.7 4.2"/></svg>
<div class="lk" style="right:13px">1</div>
<svg class="gt" style="right:5.3px" viewBox="0 0 3.6 4.8" fill="none" stroke="#403e45" stroke-width=".95" stroke-linecap="round" stroke-linejoin="round"><path d="M.7 .6L2.9 2.4L.7 4.2"/></svg>
</div>
<div class="r e" style="top:80.85px">
<div class="c" style="left:3.4px">04.2009</div>
<div class="lk" style="right:890.5px">3</div>
<svg class="gt" style="right:882.8px" viewBox="0 0 3.6 4.8" fill="none" stroke="#403e45" stroke-width=".95" stroke-linecap="round" stroke-linejoin="round"><path d="M.7 .6L2.9 2.4L.7 4.2"/></svg>
<div class="c" style="right:801.5px">2</div>
<div class="c" style="right:722.35px">104.606,76</div>
<div class="c neg" style="right:642.35px">-3.779,60</div>
<div class="lk" style="right:572.25px">0</div>
<svg class="gt" style="right:564.55px" viewBox="0 0 3.6 4.8" fill="none" stroke="#403e45" stroke-width=".95" stroke-linecap="round" stroke-linejoin="round"><path d="M.7 .6L2.9 2.4L.7 4.2"/></svg>
<div class="lk" style="right:492.25px">0</div>
<svg class="gt" style="right:484.55px" viewBox="0 0 3.6 4.8" fill="none" stroke="#403e45" stroke-width=".95" stroke-linecap="round" stroke-linejoin="round"><path d="M.7 .6L2.9 2.4L.7 4.2"/></svg>
<div class="lk" style="right:412.35px">0</div>
<svg class="gt" style="right:404.65px" viewBox="0 0 3.6 4.8" fill="none" stroke="#403e45" stroke-width=".95" stroke-linecap="round" stroke-linejoin="round"><path d="M.7 .6L2.9 2.4L.7 4.2"/></svg>
<div class="lk" style="right:332.25px">0</div>
<svg class="gt" style="right:324.55px" viewBox="0 0 3.6 4.8" fill="none" stroke="#403e45" stroke-width=".95" stroke-linecap="round" stroke-linejoin="round"><path d="M.7 .6L2.9 2.4L.7 4.2"/></svg>
<div class="lk" style="right:252.35px">0</div>
<svg class="gt" style="right:244.65px" viewBox="0 0 3.6 4.8" fill="none" stroke="#403e45" stroke-width=".95" stroke-linecap="round" stroke-linejoin="round"><path d="M.7 .6L2.9 2.4L.7 4.2"/></svg>
<div class="lk" style="right:172.35px">0</div>
<svg class="gt" style="right:164.65px" viewBox="0 0 3.6 4.8" fill="none" stroke="#403e45" stroke-width=".95" stroke-linecap="round" stroke-linejoin="round"><path d="M.7 .6L2.9 2.4L.7 4.2"/></svg>
<div class="lk" style="right:93px">3</div>
<svg class="gt" style="right:85.3px" viewBox="0 0 3.6 4.8" fill="none" stroke="#403e45" stroke-width=".95" stroke-linecap="round" stroke-linejoin="round"><path d="M.7 .6L2.9 2.4L.7 4.2"/></svg>
<div class="lk" style="right:13px">0</div>
<svg class="gt" style="right:5.3px" viewBox="0 0 3.6 4.8" fill="none" stroke="#403e45" stroke-width=".95" stroke-linecap="round" stroke-linejoin="round"><path d="M.7 .6L2.9 2.4L.7 4.2"/></svg>
</div>
<div class="r" style="top:94.65px">
<div class="c" style="left:3.4px">05.2010</div>
<div class="lk" style="right:890.5px">1</div>
<svg class="gt" style="right:882.8px" viewBox="0 0 3.6 4.8" fill="none" stroke="#403e45" stroke-width=".95" stroke-linecap="round" stroke-linejoin="round"><path d="M.7 .6L2.9 2.4L.7 4.2"/></svg>
<div class="c" style="right:801.5px">1</div>
<div class="c" style="right:722.35px">1.665,00</div>
<div class="c neg" style="right:642.35px">-416,84</div>
<div class="lk" style="right:572.25px">0</div>
<svg class="gt" style="right:564.55px" viewBox="0 0 3.6 4.8" fill="none" stroke="#403e45" stroke-width=".95" stroke-linecap="round" stroke-linejoin="round"><path d="M.7 .6L2.9 2.4L.7 4.2"/></svg>
<div class="lk" style="right:492.25px">0</div>
<svg class="gt" style="right:484.55px" viewBox="0 0 3.6 4.8" fill="none" stroke="#403e45" stroke-width=".95" stroke-linecap="round" stroke-linejoin="round"><path d="M.7 .6L2.9 2.4L.7 4.2"/></svg>
<div class="lk" style="right:412.35px">0</div>
<svg class="gt" style="right:404.65px" viewBox="0 0 3.6 4.8" fill="none" stroke="#403e45" stroke-width=".95" stroke-linecap="round" stroke-linejoin="round"><path d="M.7 .6L2.9 2.4L.7 4.2"/></svg>
<div class="lk" style="right:332.25px">0</div>
<svg class="gt" style="right:324.55px" viewBox="0 0 3.6 4.8" fill="none" stroke="#403e45" stroke-width=".95" stroke-linecap="round" stroke-linejoin="round"><path d="M.7 .6L2.9 2.4L.7 4.2"/></svg>
<div class="lk" style="right:252.35px">0</div>
<svg class="gt" style="right:244.65px" viewBox="0 0 3.6 4.8" fill="none" stroke="#403e45" stroke-width=".95" stroke-linecap="round" stroke-linejoin="round"><path d="M.7 .6L2.9 2.4L.7 4.2"/></svg>
<div class="lk" style="right:172.35px">0</div>
<svg class="gt" style="right:164.65px" viewBox="0 0 3.6 4.8" fill="none" stroke="#403e45" stroke-width=".95" stroke-linecap="round" stroke-linejoin="round"><path d="M.7 .6L2.9 2.4L.7 4.2"/></svg>
<div class="lk" style="right:93px">1</div>
<svg class="gt" style="right:85.3px" viewBox="0 0 3.6 4.8" fill="none" stroke="#403e45" stroke-width=".95" stroke-linecap="round" stroke-linejoin="round"><path d="M.7 .6L2.9 2.4L.7 4.2"/></svg>
<div class="lk" style="right:13px">0</div>
<svg class="gt" style="right:5.3px" viewBox="0 0 3.6 4.8" fill="none" stroke="#403e45" stroke-width=".95" stroke-linecap="round" stroke-linejoin="round"><path d="M.7 .6L2.9 2.4L.7 4.2"/></svg>
</div>
<div class="r e" style="top:108.45px">
<div class="c" style="left:3.4px">06.2010</div>
<div class="lk" style="right:890.5px">1</div>
<svg class="gt" style="right:882.8px" viewBox="0 0 3.6 4.8" fill="none" stroke="#403e45" stroke-width=".95" stroke-linecap="round" stroke-linejoin="round"><path d="M.7 .6L2.9 2.4L.7 4.2"/></svg>
<div class="c" style="right:801.5px">1</div>
<div class="c" style="right:722.35px">3.000,00</div>
<div class="c neg" style="right:642.35px">-1.093,52</div>
<div class="lk" style="right:572.25px">0</div>
<svg class="gt" style="right:564.55px" viewBox="0 0 3.6 4.8" fill="none" stroke="#403e45" stroke-width=".95" stroke-linecap="round" stroke-linejoin="round"><path d="M.7 .6L2.9 2.4L.7 4.2"/></svg>
<div class="lk" style="right:492.25px">0</div>
<svg class="gt" style="right:484.55px" viewBox="0 0 3.6 4.8" fill="none" stroke="#403e45" stroke-width=".95" stroke-linecap="round" stroke-linejoin="round"><path d="M.7 .6L2.9 2.4L.7 4.2"/></svg>
<div class="lk" style="right:412.35px">0</div>
<svg class="gt" style="right:404.65px" viewBox="0 0 3.6 4.8" fill="none" stroke="#403e45" stroke-width=".95" stroke-linecap="round" stroke-linejoin="round"><path d="M.7 .6L2.9 2.4L.7 4.2"/></svg>
<div class="lk" style="right:332.25px">0</div>
<svg class="gt" style="right:324.55px" viewBox="0 0 3.6 4.8" fill="none" stroke="#403e45" stroke-width=".95" stroke-linecap="round" stroke-linejoin="round"><path d="M.7 .6L2.9 2.4L.7 4.2"/></svg>
<div class="lk" style="right:252.35px">0</div>
<svg class="gt" style="right:244.65px" viewBox="0 0 3.6 4.8" fill="none" stroke="#403e45" stroke-width=".95" stroke-linecap="round" stroke-linejoin="round"><path d="M.7 .6L2.9 2.4L.7 4.2"/></svg>
<div class="lk" style="right:172.35px">0</div>
<svg class="gt" style="right:164.65px" viewBox="0 0 3.6 4.8" fill="none" stroke="#403e45" stroke-width=".95" stroke-linecap="round" stroke-linejoin="round"><path d="M.7 .6L2.9 2.4L.7 4.2"/></svg>
<div class="lk" style="right:93px">1</div>
<svg class="gt" style="right:85.3px" viewBox="0 0 3.6 4.8" fill="none" stroke="#403e45" stroke-width=".95" stroke-linecap="round" stroke-linejoin="round"><path d="M.7 .6L2.9 2.4L.7 4.2"/></svg>
<div class="lk" style="right:13px">0</div>
<svg class="gt" style="right:5.3px" viewBox="0 0 3.6 4.8" fill="none" stroke="#403e45" stroke-width=".95" stroke-linecap="round" stroke-linejoin="round"><path d="M.7 .6L2.9 2.4L.7 4.2"/></svg>
</div>
<div class="r" style="top:122.25px">
<div class="c" style="left:3.4px">07.2010</div>
<div class="lk" style="right:890.5px">1</div>
<svg class="gt" style="right:882.8px" viewBox="0 0 3.6 4.8" fill="none" stroke="#403e45" stroke-width=".95" stroke-linecap="round" stroke-linejoin="round"><path d="M.7 .6L2.9 2.4L.7 4.2"/></svg>
<div class="c" style="right:801.5px">1</div>
<div class="c" style="right:722.35px">66.000,00</div>
<div class="c" style="right:642.35px">0,00</div>
<div class="lk" style="right:572.25px">0</div>
<svg class="gt" style="right:564.55px" viewBox="0 0 3.6 4.8" fill="none" stroke="#403e45" stroke-width=".95" stroke-linecap="round" stroke-linejoin="round"><path d="M.7 .6L2.9 2.4L.7 4.2"/></svg>
<div class="lk" style="right:492.25px">0</div>
<svg class="gt" style="right:484.55px" viewBox="0 0 3.6 4.8" fill="none" stroke="#403e45" stroke-width=".95" stroke-linecap="round" stroke-linejoin="round"><path d="M.7 .6L2.9 2.4L.7 4.2"/></svg>
<div class="lk" style="right:412.35px">0</div>
<svg class="gt" style="right:404.65px" viewBox="0 0 3.6 4.8" fill="none" stroke="#403e45" stroke-width=".95" stroke-linecap="round" stroke-linejoin="round"><path d="M.7 .6L2.9 2.4L.7 4.2"/></svg>
<div class="lk" style="right:332.25px">0</div>
<svg class="gt" style="right:324.55px" viewBox="0 0 3.6 4.8" fill="none" stroke="#403e45" stroke-width=".95" stroke-linecap="round" stroke-linejoin="round"><path d="M.7 .6L2.9 2.4L.7 4.2"/></svg>
<div class="lk" style="right:252.35px">0</div>
<svg class="gt" style="right:244.65px" viewBox="0 0 3.6 4.8" fill="none" stroke="#403e45" stroke-width=".95" stroke-linecap="round" stroke-linejoin="round"><path d="M.7 .6L2.9 2.4L.7 4.2"/></svg>
<div class="lk" style="right:172.35px">0</div>
<svg class="gt" style="right:164.65px" viewBox="0 0 3.6 4.8" fill="none" stroke="#403e45" stroke-width=".95" stroke-linecap="round" stroke-linejoin="round"><path d="M.7 .6L2.9 2.4L.7 4.2"/></svg>
<div class="lk" style="right:93px">1</div>
<svg class="gt" style="right:85.3px" viewBox="0 0 3.6 4.8" fill="none" stroke="#403e45" stroke-width=".95" stroke-linecap="round" stroke-linejoin="round"><path d="M.7 .6L2.9 2.4L.7 4.2"/></svg>
<div class="lk" style="right:13px">0</div>
<svg class="gt" style="right:5.3px" viewBox="0 0 3.6 4.8" fill="none" stroke="#403e45" stroke-width=".95" stroke-linecap="round" stroke-linejoin="round"><path d="M.7 .6L2.9 2.4L.7 4.2"/></svg>
</div>
<div class="r e" style="top:136.05px">
<div class="c" style="left:3.4px">08.2010</div>
<div class="lk" style="right:890.5px">1</div>
<svg class="gt" style="right:882.8px" viewBox="0 0 3.6 4.8" fill="none" stroke="#403e45" stroke-width=".95" stroke-linecap="round" stroke-linejoin="round"><path d="M.7 .6L2.9 2.4L.7 4.2"/></svg>
<div class="c" style="right:801.5px">1</div>
<div class="c" style="right:722.35px">105.530,15</div>
<div class="c neg" style="right:642.35px">-7.041,65</div>
<div class="lk" style="right:572.25px">0</div>
<svg class="gt" style="right:564.55px" viewBox="0 0 3.6 4.8" fill="none" stroke="#403e45" stroke-width=".95" stroke-linecap="round" stroke-linejoin="round"><path d="M.7 .6L2.9 2.4L.7 4.2"/></svg>
<div class="lk" style="right:492.25px">0</div>
<svg class="gt" style="right:484.55px" viewBox="0 0 3.6 4.8" fill="none" stroke="#403e45" stroke-width=".95" stroke-linecap="round" stroke-linejoin="round"><path d="M.7 .6L2.9 2.4L.7 4.2"/></svg>
<div class="lk" style="right:412.35px">0</div>
<svg class="gt" style="right:404.65px" viewBox="0 0 3.6 4.8" fill="none" stroke="#403e45" stroke-width=".95" stroke-linecap="round" stroke-linejoin="round"><path d="M.7 .6L2.9 2.4L.7 4.2"/></svg>
<div class="lk" style="right:332.25px">0</div>
<svg class="gt" style="right:324.55px" viewBox="0 0 3.6 4.8" fill="none" stroke="#403e45" stroke-width=".95" stroke-linecap="round" stroke-linejoin="round"><path d="M.7 .6L2.9 2.4L.7 4.2"/></svg>
<div class="lk" style="right:252.35px">0</div>
<svg class="gt" style="right:244.65px" viewBox="0 0 3.6 4.8" fill="none" stroke="#403e45" stroke-width=".95" stroke-linecap="round" stroke-linejoin="round"><path d="M.7 .6L2.9 2.4L.7 4.2"/></svg>
<div class="lk" style="right:172.35px">1</div>
<svg class="gt" style="right:164.65px" viewBox="0 0 3.6 4.8" fill="none" stroke="#403e45" stroke-width=".95" stroke-linecap="round" stroke-linejoin="round"><path d="M.7 .6L2.9 2.4L.7 4.2"/></svg>
<div class="lk" style="right:93px">0</div>
<svg class="gt" style="right:85.3px" viewBox="0 0 3.6 4.8" fill="none" stroke="#403e45" stroke-width=".95" stroke-linecap="round" stroke-linejoin="round"><path d="M.7 .6L2.9 2.4L.7 4.2"/></svg>
<div class="lk" style="right:13px">0</div>
<svg class="gt" style="right:5.3px" viewBox="0 0 3.6 4.8" fill="none" stroke="#403e45" stroke-width=".95" stroke-linecap="round" stroke-linejoin="round"><path d="M.7 .6L2.9 2.4L.7 4.2"/></svg>
</div>
<div class="r" style="top:149.85px">
<div class="c" style="left:3.4px">10.2010</div>
<div class="lk" style="right:890.5px">1</div>
<svg class="gt" style="right:882.8px" viewBox="0 0 3.6 4.8" fill="none" stroke="#403e45" stroke-width=".95" stroke-linecap="round" stroke-linejoin="round"><path d="M.7 .6L2.9 2.4L.7 4.2"/></svg>
<div class="c" style="right:801.5px">1</div>
<div class="c" style="right:722.35px">7.500,00</div>
<div class="c neg" style="right:642.35px">-2.733,80</div>
<div class="lk" style="right:572.25px">0</div>
<svg class="gt" style="right:564.55px" viewBox="0 0 3.6 4.8" fill="none" stroke="#403e45" stroke-width=".95" stroke-linecap="round" stroke-linejoin="round"><path d="M.7 .6L2.9 2.4L.7 4.2"/></svg>
<div class="lk" style="right:492.25px">0</div>
<svg class="gt" style="right:484.55px" viewBox="0 0 3.6 4.8" fill="none" stroke="#403e45" stroke-width=".95" stroke-linecap="round" stroke-linejoin="round"><path d="M.7 .6L2.9 2.4L.7 4.2"/></svg>
<div class="lk" style="right:412.35px">0</div>
<svg class="gt" style="right:404.65px" viewBox="0 0 3.6 4.8" fill="none" stroke="#403e45" stroke-width=".95" stroke-linecap="round" stroke-linejoin="round"><path d="M.7 .6L2.9 2.4L.7 4.2"/></svg>
<div class="lk" style="right:332.25px">0</div>
<svg class="gt" style="right:324.55px" viewBox="0 0 3.6 4.8" fill="none" stroke="#403e45" stroke-width=".95" stroke-linecap="round" stroke-linejoin="round"><path d="M.7 .6L2.9 2.4L.7 4.2"/></svg>
<div class="lk" style="right:252.35px">0</div>
<svg class="gt" style="right:244.65px" viewBox="0 0 3.6 4.8" fill="none" stroke="#403e45" stroke-width=".95" stroke-linecap="round" stroke-linejoin="round"><path d="M.7 .6L2.9 2.4L.7 4.2"/></svg>
<div class="lk" style="right:172.35px">0</div>
<svg class="gt" style="right:164.65px" viewBox="0 0 3.6 4.8" fill="none" stroke="#403e45" stroke-width=".95" stroke-linecap="round" stroke-linejoin="round"><path d="M.7 .6L2.9 2.4L.7 4.2"/></svg>
<div class="lk" style="right:93px">1</div>
<svg class="gt" style="right:85.3px" viewBox="0 0 3.6 4.8" fill="none" stroke="#403e45" stroke-width=".95" stroke-linecap="round" stroke-linejoin="round"><path d="M.7 .6L2.9 2.4L.7 4.2"/></svg>
<div class="lk" style="right:13px">0</div>
<svg class="gt" style="right:5.3px" viewBox="0 0 3.6 4.8" fill="none" stroke="#403e45" stroke-width=".95" stroke-linecap="round" stroke-linejoin="round"><path d="M.7 .6L2.9 2.4L.7 4.2"/></svg>
</div>
<div class="r e" style="top:163.65px">
<div class="c" style="left:3.4px">11.2010</div>
<div class="lk" style="right:890.5px">5</div>
<svg class="gt" style="right:882.8px" viewBox="0 0 3.6 4.8" fill="none" stroke="#403e45" stroke-width=".95" stroke-linecap="round" stroke-linejoin="round"><path d="M.7 .6L2.9 2.4L.7 4.2"/></svg>
<div class="c" style="right:801.5px">4</div>
<div class="c" style="right:722.35px">30.222,00</div>
<div class="c neg" style="right:642.35px">-4.688,05</div>
<div class="lk" style="right:572.25px">0</div>
<svg class="gt" style="right:564.55px" viewBox="0 0 3.6 4.8" fill="none" stroke="#403e45" stroke-width=".95" stroke-linecap="round" stroke-linejoin="round"><path d="M.7 .6L2.9 2.4L.7 4.2"/></svg>
<div class="lk" style="right:492.25px">0</div>
<svg class="gt" style="right:484.55px" viewBox="0 0 3.6 4.8" fill="none" stroke="#403e45" stroke-width=".95" stroke-linecap="round" stroke-linejoin="round"><path d="M.7 .6L2.9 2.4L.7 4.2"/></svg>
<div class="lk" style="right:412.35px">0</div>
<svg class="gt" style="right:404.65px" viewBox="0 0 3.6 4.8" fill="none" stroke="#403e45" stroke-width=".95" stroke-linecap="round" stroke-linejoin="round"><path d="M.7 .6L2.9 2.4L.7 4.2"/></svg>
<div class="lk" style="right:332.25px">0</div>
<svg class="gt" style="right:324.55px" viewBox="0 0 3.6 4.8" fill="none" stroke="#403e45" stroke-width=".95" stroke-linecap="round" stroke-linejoin="round"><path d="M.7 .6L2.9 2.4L.7 4.2"/></svg>
<div class="lk" style="right:252.35px">0</div>
<svg class="gt" style="right:244.65px" viewBox="0 0 3.6 4.8" fill="none" stroke="#403e45" stroke-width=".95" stroke-linecap="round" stroke-linejoin="round"><path d="M.7 .6L2.9 2.4L.7 4.2"/></svg>
<div class="lk" style="right:172.35px">0</div>
<svg class="gt" style="right:164.65px" viewBox="0 0 3.6 4.8" fill="none" stroke="#403e45" stroke-width=".95" stroke-linecap="round" stroke-linejoin="round"><path d="M.7 .6L2.9 2.4L.7 4.2"/></svg>
<div class="lk" style="right:93px">5</div>
<svg class="gt" style="right:85.3px" viewBox="0 0 3.6 4.8" fill="none" stroke="#403e45" stroke-width=".95" stroke-linecap="round" stroke-linejoin="round"><path d="M.7 .6L2.9 2.4L.7 4.2"/></svg>
<div class="lk" style="right:13px">0</div>
<svg class="gt" style="right:5.3px" viewBox="0 0 3.6 4.8" fill="none" stroke="#403e45" stroke-width=".95" stroke-linecap="round" stroke-linejoin="round"><path d="M.7 .6L2.9 2.4L.7 4.2"/></svg>
</div>
<div class="r" style="top:177.45px">
<div class="c" style="left:3.4px">12.2010</div>
<div class="lk" style="right:890.5px">1</div>
<svg class="gt" style="right:882.8px" viewBox="0 0 3.6 4.8" fill="none" stroke="#403e45" stroke-width=".95" stroke-linecap="round" stroke-linejoin="round"><path d="M.7 .6L2.9 2.4L.7 4.2"/></svg>
<div class="c" style="right:801.5px">1</div>
<div class="c" style="right:722.35px"></div>
<div class="c" style="right:642.35px"></div>
<div class="lk" style="right:572.25px">0</div>
<svg class="gt" style="right:564.55px" viewBox="0 0 3.6 4.8" fill="none" stroke="#403e45" stroke-width=".95" stroke-linecap="round" stroke-linejoin="round"><path d="M.7 .6L2.9 2.4L.7 4.2"/></svg>
<div class="lk" style="right:492.25px">0</div>
<svg class="gt" style="right:484.55px" viewBox="0 0 3.6 4.8" fill="none" stroke="#403e45" stroke-width=".95" stroke-linecap="round" stroke-linejoin="round"><path d="M.7 .6L2.9 2.4L.7 4.2"/></svg>
<div class="lk" style="right:412.35px">0</div>
<svg class="gt" style="right:404.65px" viewBox="0 0 3.6 4.8" fill="none" stroke="#403e45" stroke-width=".95" stroke-linecap="round" stroke-linejoin="round"><path d="M.7 .6L2.9 2.4L.7 4.2"/></svg>
<div class="lk" style="right:332.25px">0</div>
<svg class="gt" style="right:324.55px" viewBox="0 0 3.6 4.8" fill="none" stroke="#403e45" stroke-width=".95" stroke-linecap="round" stroke-linejoin="round"><path d="M.7 .6L2.9 2.4L.7 4.2"/></svg>
<div class="lk" style="right:252.35px">0</div>
<svg class="gt" style="right:244.65px" viewBox="0 0 3.6 4.8" fill="none" stroke="#403e45" stroke-width=".95" stroke-linecap="round" stroke-linejoin="round"><path d="M.7 .6L2.9 2.4L.7 4.2"/></svg>
<div class="lk" style="right:172.35px">0</div>
<svg class="gt" style="right:164.65px" viewBox="0 0 3.6 4.8" fill="none" stroke="#403e45" stroke-width=".95" stroke-linecap="round" stroke-linejoin="round"><path d="M.7 .6L2.9 2.4L.7 4.2"/></svg>
<div class="lk" style="right:93px">1</div>
<svg class="gt" style="right:85.3px" viewBox="0 0 3.6 4.8" fill="none" stroke="#403e45" stroke-width=".95" stroke-linecap="round" stroke-linejoin="round"><path d="M.7 .6L2.9 2.4L.7 4.2"/></svg>
<div class="lk" style="right:13px">0</div>
<svg class="gt" style="right:5.3px" viewBox="0 0 3.6 4.8" fill="none" stroke="#403e45" stroke-width=".95" stroke-linecap="round" stroke-linejoin="round"><path d="M.7 .6L2.9 2.4L.7 4.2"/></svg>
</div>
<div class="vl" style="left:53.8px"></div>
<div class="vl" style="left:133.55px"></div>
<div class="vl" style="left:212.55px"></div>
<div class="vl" style="left:291.7px"></div>
<div class="vl" style="left:371.7px"></div>
<div class="vl" style="left:451.8px"></div>
<div class="vl" style="left:531.8px"></div>
<div class="vl" style="left:611.7px"></div>
<div class="vl" style="left:691.8px"></div>
<div class="vl" style="left:771.7px"></div>
<div class="vl" style="left:851.7px"></div>
<div class="vl" style="left:931.05px"></div>
</div>
<div id="sb" class="abs"></div><div id="sbth" class="abs"></div>
<div class="abs" style="left:127px;top:269.9px;width:1021.8px;height:.9px;background:#d6dce6"></div>
<div class="ph" style="top:270.7px;height:27.1px"></div>
<svg class="abs" style="left:133px;top:277px" width="15" height="15" viewBox="133 277 15 15"><path d="M134 282.6H138V290.7H134ZM138.7 278H142.6V290.7H138.7ZM143.3 284.4H146.9V290.7H143.3Z" fill="#6a6b6e"/></svg>
<div class="ptitle" style="top:278px">Umsätze nach Monat</div>
<div class="pcount" style="left:1080px;top:278px">5</div>
<div class="tools" style="top:270.7px;height:27.1px"></div>
<div class="abs" style="left:1135px;top:270.7px;width:.8px;height:13.6px;background:#f1f3f6"></div>
<div class="abs" style="left:1121.3px;top:284.2px;width:27.5px;height:.8px;background:#f1f3f6"></div>
<svg class="abs" style="left:1124px;top:274px" width="8" height="8" viewBox="0 0 8 8" fill="none" stroke="#606065"><rect x="1.5" y=".9" width="6" height="5.6" stroke-width="1"/><path d="M1.5 1.9H7.5" stroke-width="1.9"/><path d="M3.5 2.5V6.5M5.5 2.5V6.5" stroke-width=".85"/><path d="M1.5 4.5H7.5" stroke-width=".8"/></svg>
<svg class="abs" style="left:1138px;top:274px" width="8" height="8" viewBox="0 0 8 8"><path d="M2.55 5.95A2.45 2.45 0 0 1 3.8 1.3M5.05 1.65A2.45 2.45 0 0 1 3.8 6.2" fill="none" stroke="#5a5a5f" stroke-width=".95"/><path d="M3.6 .3L4.8 1.3L3.6 2.3ZM4 7.2L2.8 6.2L4 5.2Z" fill="#55555a"/></svg>
<div id="chartbg" class="abs"></div><div id="below" class="abs"></div>
<svg class="abs" style="left:124px;top:298px" width="1026" height="239" viewBox="124 298 1026 239">
<path d="M152.6 347.26H1130.4" stroke="#d6d6d6" stroke-width="1"/>
<path d="M152.6 391.3H1130.4" stroke="#d6d6d6" stroke-width="1"/>
<path d="M152.6 435.34H1130.4" stroke="#d6d6d6" stroke-width="1"/>
<path d="M152.6 479.38H1130.4" stroke="#d6d6d6" stroke-width="1"/>
<path d="M201 303V523.2" stroke="#e6e6e6" stroke-width=".8"/>
<path d="M349.4 303V523.2" stroke="#d2d2d2" stroke-width=".8"/>
<path d="M493.1 303V523.2" stroke="#ececec" stroke-width=".8"/>
<path d="M641.5 303V523.2" stroke="#d2d2d2" stroke-width=".8"/>
<path d="M785.1 303V523.2" stroke="#ececec" stroke-width=".8"/>
<path d="M933.6 303V523.2" stroke="#c8c8c8" stroke-width=".8"/>
<path d="M1081.8 303V523.2" stroke="#dcdcdc" stroke-width=".8"/>
<rect x="152.7" y="334" width="96.3" height="189.2" fill="#8ac4a7"/>
<rect x="301.8" y="387.8" width="95.4" height="135.4" fill="#8ac4a7"/>
<rect x="445.2" y="411.6" width="95.8" height="111.6" fill="#8ac4a7"/>
<rect x="593.6" y="334" width="95.5" height="189.2" fill="#8ac4a7"/>
<rect x="1034" y="334" width="96.2" height="189.2" fill="#8ac4a7"/>
<path d="M201 334V523.2" stroke="#88c1a5" stroke-width=".8"/>
<path d="M349.4 387.8V523.2" stroke="#88c1a5" stroke-width=".8"/>
<path d="M493.1 411.6V523.2" stroke="#88c1a5" stroke-width=".8"/>
<path d="M641.5 334V523.2" stroke="#88c1a5" stroke-width=".8"/>
<path d="M1081.8 334V523.2" stroke="#88c1a5" stroke-width=".8"/>
<circle cx="201" cy="333.9" r="1.9" fill="#fff" stroke="#8ac4a7" stroke-width="1.05"/>
<circle cx="349.4" cy="387.7" r="1.9" fill="#fff" stroke="#8ac4a7" stroke-width="1.05"/>
<circle cx="493.1" cy="411.5" r="1.9" fill="#fff" stroke="#8ac4a7" stroke-width="1.05"/>
<circle cx="641.5" cy="333.9" r="1.9" fill="#fff" stroke="#8ac4a7" stroke-width="1.05"/>
<circle cx="1081.8" cy="333.9" r="1.9" fill="#fff" stroke="#8ac4a7" stroke-width="1.05"/>
<path d="M151.9 303H1131.1" stroke="#787878" stroke-width="2"/>
<path d="M152.6 303V523.7" stroke="#4a4a4a" stroke-width="1.3"/>
<path d="M1130.4 303V523.7" stroke="#4a4a4a" stroke-width="1.3"/>
<path d="M152 523.2H1131" stroke="#4a4a4a" stroke-width="1.1"/>
<rect x="1089" y="307.5" width="10" height="7.2" fill="#fff" stroke="#d8d8d8" stroke-width=".6"/><rect x="1089.9" y="308.3" width="8.2" height="5.6" fill="#8ac4a7"/>
</svg>
<div class="abs" style="left:1101.1px;top:307.2px;font-size:7.4px;line-height:9px;color:#545454;will-change:transform">Umsatz</div>
<div class="yl" style="top:299.7px">25000</div>
<div class="yl" style="top:342.74px">20000</div>
<div class="yl" style="top:386.78px">15000</div>
<div class="yl" style="top:430.82px">10000</div>
<div class="yl" style="top:474.86px">5000</div>
<div class="yl" style="top:518.9px">0</div>
<div class="xl" style="left:171px">August</div>
<div class="xl" style="left:319.4px">September</div>
<div class="xl" style="left:463.1px">Oktober</div>
<div class="xl" style="left:611.5px">November</div>
<div class="xl" style="left:755.1px">Dezember</div>
<div class="xl" style="left:903.6px">Januar</div>
<div class="xl" style="left:1051.8px">Februar</div>
</body>
</html>
